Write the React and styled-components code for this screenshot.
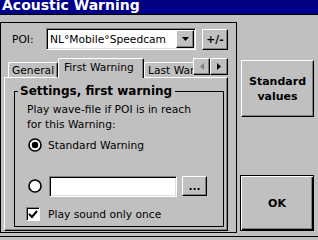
import React from "react";
import styled, { createGlobalStyle } from "styled-components";

const GlobalStyle = createGlobalStyle`
  html, body {
    margin: 0;
    padding: 0;
    background: #c0c0c0;
  }
  body {
    font-family: "DejaVu Sans", Tahoma, sans-serif;
    font-size: 10.7px;
    color: #000;
  }
`;

const Window = styled.div`
  width: 318px;
  height: 240px;
  display: flex;
  flex-direction: column;
  overflow: hidden;
  background: #c0c0c0;
`;

const TitleBar = styled.div`
  height: 15px;
  box-sizing: border-box;
  background: #000080;
  border-bottom: 1px solid #000;
  padding-left: 2px;
  overflow: hidden;
`;

const TitleText = styled.div`
  color: #fff;
  font-weight: bold;
  font-size: 14px;
  line-height: 14px;
  margin-top: -2px;
  white-space: nowrap;
`;

const Body = styled.div`
  flex: 1;
  display: flex;
  padding: 7px 5px 3px 0;
  gap: 3px;
  min-height: 0;
`;

const Footer = styled.div`
  height: 4px;
  box-sizing: border-box;
  border-top: 1px solid #000;
`;

const Panel = styled.div`
  width: 237px;
  box-sizing: border-box;
  border: 1px solid #000;
  padding: 5px 8px 2px 3px;
  display: flex;
  flex-direction: column;
`;

const PoiRow = styled.div`
  display: flex;
  align-items: center;
  height: 22px;
  padding-left: 8px;
`;

const Label = styled.span`
  width: 34px;
`;

const Sunken = styled.div`
  box-sizing: border-box;
  background: #fff;
  border-top: 1px solid #808080;
  border-left: 1px solid #808080;
  border-right: 1px solid #fff;
  border-bottom: 1px solid #fff;
  box-shadow: inset 1px 1px #000, inset -1px -1px #dfdfdf;
  width: ${(p) => p.$w}px;
  height: ${(p) => p.$h}px;
  margin-left: ${(p) => p.$ml || 0}px;
  flex-shrink: 0;
`;

const Combo = styled(Sunken)`
  display: flex;
  align-items: center;
  padding: 1px 1px 1px 3px;
`;

const ComboText = styled.span`
  flex: 1;
  white-space: nowrap;
  overflow: hidden;
`;

const Raised = styled.div`
  box-sizing: border-box;
  background: #c0c0c0;
  border-top: 1px solid #fff;
  border-left: 1px solid #fff;
  border-right: 1px solid #000;
  border-bottom: 1px solid #000;
  box-shadow: inset -1px -1px #808080;
  display: flex;
  align-items: center;
  justify-content: center;
  font-weight: ${(p) => (p.$bold ? "bold" : "normal")};
  width: ${(p) => p.$w}px;
  height: ${(p) => p.$h}px;
  margin-left: ${(p) => p.$ml || 0}px;
  flex-shrink: 0;
`;

const PushButton = styled(Raised)`
  text-align: center;
  font-size: 11px;
  line-height: 15px;
  ${(p) =>
    p.$default &&
    `
    border: 1px solid #000;
    box-shadow: inset 1px 1px #fff, inset -1px -1px #000, inset -2px -2px #808080;
  `}
`;

const TabStrip = styled.div`
  position: relative;
  z-index: 1;
  display: flex;
  align-items: flex-start;
  height: 20px;
  margin-top: 8px;
  margin-bottom: -1px;
`;

const Tabs = styled.div`
  flex: 1;
  display: flex;
  align-items: flex-end;
  height: 20px;
  padding-left: 4px;
  overflow: hidden;
`;

const Tab = styled.div`
  box-sizing: border-box;
  flex-shrink: 0;
  height: ${(p) => (p.$active ? 20 : 16)}px;
  width: ${(p) => p.$w}px;
  background: #c0c0c0;
  border-top: 1px solid #fff;
  border-left: 1px solid #fff;
  border-right: 1px solid #000;
  border-radius: 2px 2px 0 0;
  box-shadow: inset -1px 0 #808080;
  display: flex;
  align-items: ${(p) => (p.$active ? "flex-start" : "center")};
  padding: ${(p) => (p.$active ? "2px 0 0 5px" : "0 0 0 3px")};
  white-space: nowrap;
  overflow: hidden;
  border-bottom: ${(p) => (p.$active ? "none" : "1px solid #fff")};
`;

const Arrows = styled.div`
  display: flex;
`;

const TabPage = styled.div`
  flex: 1;
  box-sizing: border-box;
  border-top: 1px solid #fff;
  border-left: 1px solid #fff;
  border-right: 1px solid #000;
  border-bottom: 1px solid #000;
  box-shadow: inset -1px -1px #808080;
  display: flex;
  padding: 6px 3px 3px 9px;
`;

const Group = styled.fieldset`
  flex: 1;
  margin: 0;
  border: 1px solid #000;
  padding: 0 4px 4px 12px;
  display: flex;
  flex-direction: column;
  min-width: 0;
`;

const Legend = styled.legend`
  font-weight: bold;
  font-size: 12px;
  line-height: 15px;
  padding: 0 3px 0 2px;
  margin-left: -9px;
`;

const Para = styled.div`
  line-height: 15px;
  margin-top: 3px;
`;

const OptionRow = styled.div`
  display: flex;
  align-items: center;
  gap: ${(p) => p.$gap || 6}px;
  height: ${(p) => p.$h}px;
  margin-top: ${(p) => p.$mt}px;
  margin-left: ${(p) => p.$ml || 0}px;
`;

const CheckBox = styled(Sunken)`
  box-shadow: inset 1px 1px #000;
  display: flex;
  align-items: center;
  justify-content: center;
`;

const RightColumn = styled.div`
  width: 74px;
  display: flex;
  flex-direction: column;
  justify-content: space-between;
  align-items: flex-end;
  padding: 38px 0 2px 0;
`;

function Radio({ checked }) {
  return (
    <svg width="14" height="14" viewBox="0 0 14 14">
      <circle cx="7" cy="7" r="6" fill="#fff" stroke="#000" strokeWidth="1.6" />
      {checked && <circle cx="7" cy="7" r="3.2" fill="#000" />}
    </svg>
  );
}

function Triangle({ dir, color }) {
  const pts =
    dir === "down"
      ? "0,0 7,0 3.5,4"
      : dir === "left"
      ? "4,0 4,7 0,3.5"
      : "0,0 0,7 4,3.5";
  const w = dir === "down" ? 7 : 4;
  const h = dir === "down" ? 4 : 7;
  return (
    <svg width={w} height={h} viewBox={`0 0 ${w} ${h}`}>
      <polygon points={pts} fill={color} />
    </svg>
  );
}

export default function App() {
  return (
    <Window>
      <GlobalStyle />
      <TitleBar>
        <TitleText>Acoustic Warning</TitleText>
      </TitleBar>
      <Body>
        <Panel>
          <PoiRow>
            <Label>POI:</Label>
            <Combo $w={150} $h={22}>
              <ComboText>NL°Mobile°Speedcam</ComboText>
              <Raised $w={18} $h={18}>
                <Triangle dir="down" color="#000" />
              </Raised>
            </Combo>
            <Raised $w={26} $h={21} $bold $ml={6}>
              +/-
            </Raised>
          </PoiRow>
          <TabStrip>
            <Tabs>
              <Tab $w={50}>General</Tab>
              <Tab $w={86} $active>
                First Warning
              </Tab>
              <Tab $w={60}>Last Warning</Tab>
            </Tabs>
            <Arrows>
              <Raised $w={17} $h={17}>
                <Triangle dir="left" color="#808080" />
              </Raised>
              <Raised $w={18} $h={17}>
                <Triangle dir="right" color="#000" />
              </Raised>
            </Arrows>
          </TabStrip>
          <TabPage>
            <Group>
              <Legend>Settings, first warning</Legend>
              <Para>
                Play wave-file if POI is in reach
                <br />
                for this Warning:
              </Para>
              <OptionRow $h={16} $mt={5} $ml={1}>
                <Radio checked />
                Standard Warning
              </OptionRow>
              <OptionRow $h={22} $mt={22} $ml={1} $gap={5}>
                <Radio />
                <Sunken $w={128} $h={21} $ml={2} />
                <Raised $w={25} $h={20} $bold>
                  ...
                </Raised>
              </OptionRow>
              <OptionRow $h={16} $mt={9} $ml={-1} $gap={8}>
                <CheckBox $w={14} $h={14}>
                  <svg width="10" height="9" viewBox="0 0 10 9">
                    <polyline
                      points="1,4 4,7 9,1"
                      fill="none"
                      stroke="#000"
                      strokeWidth="2"
                    />
                  </svg>
                </CheckBox>
                Play sound only once
              </OptionRow>
            </Group>
          </TabPage>
        </Panel>
        <RightColumn>
          <PushButton $w={73} $h={57} $bold>
            Standard
            <br />
            values
          </PushButton>
          <PushButton $w={74} $h={56} $bold $default>
            OK
          </PushButton>
        </RightColumn>
      </Body>
      <Footer />
    </Window>
  );
}
